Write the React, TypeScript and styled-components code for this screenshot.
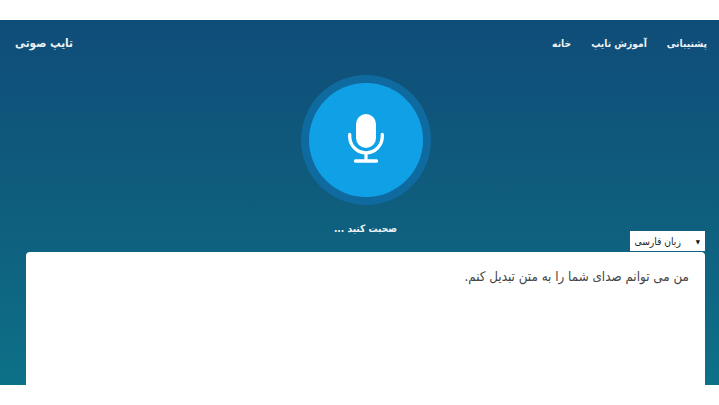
import { createGlobalStyle } from "styled-components";
import styled from "styled-components";

const GlobalStyle = createGlobalStyle`
	html, body {
		margin: 0;
		padding: 0;
		background: #ffffff;
		overflow: hidden;
	}
	body {
		font-family: "DejaVu Sans", "Noto Sans", sans-serif;
		font-stretch: condensed;
	}
`;

const Page = styled.div`
	width: 719px;
	height: 405px;
	padding: 20px 0;
	box-sizing: border-box;
	direction: rtl;
`;

const Hero = styled.main`
	height: 365px;
	display: flex;
	flex-direction: column;
	overflow: hidden;
	background: linear-gradient(180deg, #0f4d79 0%, #0f5f7e 55%, #0d7188 100%);
`;

const Nav = styled.nav`
	height: 46px;
	display: flex;
	align-items: center;
	justify-content: space-between;
	padding: 0 12px 0 15px;
	flex: none;
`;

const Links = styled.div`
	display: flex;
	gap: 20px;
`;

const NavLink = styled.a`
	color: #ffffff;
	font-size: 10.2px;
	font-weight: 700;
	opacity: 0.92;
`;

const Brand = styled.a`
	color: #ffffff;
	font-size: 11.7px;
	font-weight: 700;
	opacity: 0.92;
`;

const Content = styled.div`
	flex: 1;
	display: flex;
	flex-direction: column;
	padding: 0 14px 0 26px;
	min-height: 0;
`;

const MicRing = styled.div`
	width: 130px;
	height: 130px;
	margin: 9px auto 0;
	flex: none;
	border-radius: 50%;
	background: #0f6b9f;
	display: flex;
	align-items: center;
	justify-content: center;
`;

const MicButton = styled.div`
	width: 114px;
	height: 114px;
	border-radius: 50%;
	background: #10a0e6;
	display: flex;
	align-items: center;
	justify-content: center;
`;

const MicSvg = styled.svg`
	margin-bottom: 3px;
`;

const StatusRow = styled.div`
	display: grid;
	grid-template-columns: 1fr auto 1fr;
	align-items: end;
	margin-top: 17px;
	height: 28px;
	flex: none;
`;

const Status = styled.div`
	color: #ffffff;
	font-size: 10.1px;
	font-weight: 700;
	line-height: 14px;
	padding-bottom: 15px;
	opacity: 0.92;
`;

const LangSelect = styled.div`
	justify-self: start;
	width: 75px;
	height: 20px;
	box-sizing: border-box;
	background: #ffffff;
	display: flex;
	align-items: center;
	gap: 15px;
	padding: 0 5px 0 3px;
	font-size: 10.2px;
	color: #222222;
`;

const Arrow = styled.span`
	font-size: 6px;
	color: #111111;
`;

const Card = styled.section`
	flex: 1;
	margin-top: 2px;
	padding: 14px 16px;
	background: #ffffff;
	border-radius: 4px 4px 0 0;
	color: #444444;
	font-size: 13.3px;
	line-height: 22px;
`;

const MicIcon = () => (
	<MicSvg width="36" height="49" viewBox="0 0 36 49" fill="none">
		<rect x="8" y="0" width="20" height="34" rx="10" fill="#ffffff" />
		<path
			d="M1.7 20.5v2a16.3 16.3 0 0 0 32.6 0v-2"
			stroke="#ffffff"
			strokeWidth="3.3"
			strokeLinecap="round"
		/>
		<path d="M18 39v8" stroke="#ffffff" strokeWidth="3.2" />
		<path d="M7.5 47h21" stroke="#ffffff" strokeWidth="3.4" strokeLinecap="round" />
	</MicSvg>
);

const App = () => {
	return (
		<Page>
			<GlobalStyle />
			<Hero>
				<Nav>
					<Links>
						<NavLink>پشتیبانی</NavLink>
						<NavLink>آموزش تایپ</NavLink>
						<NavLink>خانه</NavLink>
					</Links>
					<Brand>تایپ صوتی</Brand>
				</Nav>
				<Content>
					<MicRing>
						<MicButton>
							<MicIcon />
						</MicButton>
					</MicRing>
					<StatusRow>
						<LangSelect>
							<Arrow>▼</Arrow>
							<span>زبان فارسی</span>
						</LangSelect>
						<Status>صحبت کنید ...</Status>
					</StatusRow>
					<Card>من می توانم صدای شما را به متن تبدیل کنم.</Card>
				</Content>
			</Hero>
		</Page>
	);
};

export default App;
